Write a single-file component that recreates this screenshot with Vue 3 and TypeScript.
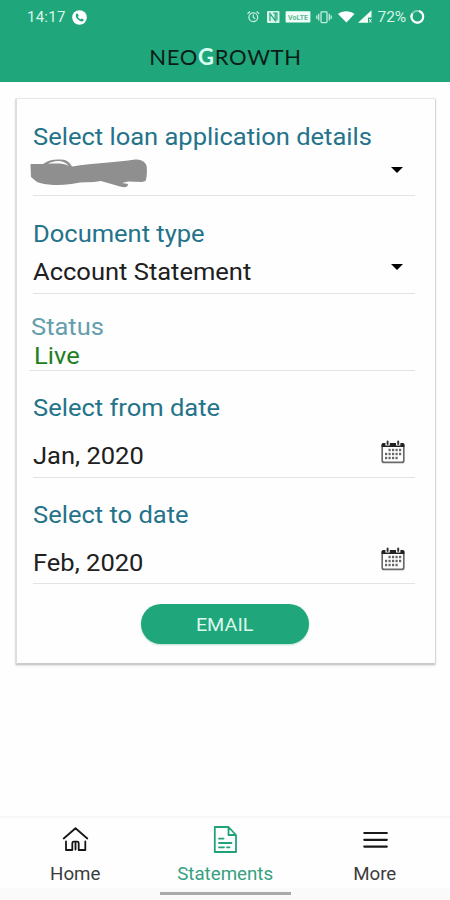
<script setup lang="ts">
interface Field {
  id: string
  label: string
  value: string
  control: 'select' | 'date' | 'none'
}

const fields: Field[] = [
  { id: 'loan', label: 'Select loan application details', value: '', control: 'select' },
  { id: 'doc', label: 'Document type', value: 'Account Statement', control: 'select' },
  { id: 'status', label: 'Status', value: 'Live', control: 'none' },
  { id: 'from', label: 'Select from date', value: 'Jan, 2020', control: 'date' },
  { id: 'to', label: 'Select to date', value: 'Feb, 2020', control: 'date' },
]
const columns = [0, 1, 2, 3, 4]
</script>

<template>
  <div class="screen">
    <header class="header">
      <div class="statusbar">
        <span class="time">14:17</span>
        <svg class="call" width="15" height="15" viewBox="0 0 15 15">
          <circle cx="7.5" cy="7.5" r="7.3" fill="#fff" />
          <path d="M4.2 3.7 5.7 3.4 6.7 5.7 5.9 6.7C6.5 8 7.3 8.8 8.6 9.3L9.6 8.4 11.8 9.5 11.3 11C9.8 12.2 7.2 10.9 5.7 9.3 4 7.6 3.1 5.1 4.2 3.7Z" fill="#1fa67b" />
        </svg>
        <div class="tray">
          <svg width="180" height="18" viewBox="0 0 180 18" fill="none">
            <g stroke="#c4eedd" stroke-width="1.3">
              <circle cx="8.3" cy="9.2" r="4.4" />
              <path d="M8.3 6.5V9.5L10.3 10.7M2.5 5.7 5 3.6M11.6 3.6 14.1 5.7" />
            </g>
            <rect x="22" y="3" width="12.5" height="12" rx="1" fill="#d5f5e9" />
            <path d="M25 13V5.5L30.2 12.6V5M28 5H31.9V12.5" stroke="#1fa67b" stroke-width="1.2" />
            <rect x="40.6" y="3.2" width="24.8" height="11.3" rx=".8" fill="#f2fff9" />
            <text x="43" y="11.5" class="volte" textLength="20">VoLTE</text>
            <g stroke="#c4eedd" stroke-width="1.3">
              <rect x="76" y="3.8" width="6" height="10.8" rx=".8" />
              <path d="M73.7 5.8V12.5M84.3 5.8V12.5M71.8 7.5V11M86.2 7.5V11" />
            </g>
            <path d="M93 6C97.5 2.4 105 2.4 109.5 6L101.4 14.4Z" fill="#fff" />
            <path d="M113 14.8 126.5 2.3V9.5H123V14.8Z" fill="#f2fff9" />
            <path d="M124.2 11 126.4 14.5M126.4 11 124.2 14.5" stroke="#e4faf1" stroke-width="1" />
            <text x="132.6" y="14.2" class="battery" textLength="28.5">72%</text>
            <circle cx="172.3" cy="8.7" r="5.9" stroke="#8bd4b9" stroke-width="1.8" />
            <path d="M174 3A5.9 5.9 0 1 1 167.3 5.6" stroke="#fff" stroke-width="2.2" />
          </svg>
        </div>
      </div>
      <h1 class="brand">NEO<span>G</span>ROWTH</h1>
    </header>

    <main class="main">
      <section class="card">
        <div v-for="f in fields" :key="f.id" class="field" :class="f.id">
          <div class="label"><span>{{ f.label }}</span></div>
          <div class="row">
            <svg v-if="f.id === 'loan'" class="scribble" width="118" height="30" viewBox="0 0 118 30">
              <path d="M.5 5H13C18 1 24 0 31 .5 38 1 40 4 42 7.5 64 4 88 3.5 105 .6 112-.2 117 4 116.8 9 117 14 117 18 115.5 22L112 23 98 22.5 92 24 98 25C98 29 94 28.5 90 27.5L71 22 64 23 50 23.5C37 26.5 22 27 10 24L7 23 1 18Z" fill="#8f8f8f" />
              <path d="M18 4.8C25 1 34 .8 39 7 34 4 26 4.2 18 4.8Z" fill="#fcfcfc" />
            </svg>
            <span v-else class="value">{{ f.value }}</span>
            <svg v-if="f.control === 'select'" class="caret" width="12" height="6" viewBox="0 0 12 6">
              <path d="M0 0H12L6 6Z" fill="#000" />
            </svg>
            <svg v-if="f.control === 'date'" class="calendar" width="24" height="24" viewBox="0 0 24 24">
              <rect x="1.2" y="4" width="21.6" height="18.4" rx="2" fill="#fff" stroke="#6a6a6a" stroke-width="1.7" />
              <path d="M.6 7V4.5Q.6 3 2.3 3H21.7Q23.4 3 23.4 4.5V7Z" fill="#222" />
              <path d="M4.4 0H8.8V5.5H4.4ZM15 0H19.4V5.5H15Z" fill="#fff" />
              <path d="M6.6 1.6V4M17.2 1.6V4" stroke="#333" stroke-width="2" stroke-linecap="round" />
              <g fill="#666">
                <template v-for="c in columns" :key="c">
                  <rect v-if="c > 0" :x="4 + c * 3.5" y="8.8" width="2.2" height="2.4" />
                  <rect :x="4 + c * 3.5" y="12.8" width="2.2" height="2.4" />
                  <rect v-if="c < 4" :x="4 + c * 3.5" y="16.8" width="2.2" height="2.4" />
                </template>
              </g>
            </svg>
          </div>
        </div>
        <button class="email" type="button"><span>EMAIL</span></button>
      </section>
    </main>

    <nav class="nav">
      <a class="tab home">
        <svg width="28" height="28" viewBox="0 0 28 28" fill="none" stroke="#161616" stroke-width="1.8" stroke-linecap="round" stroke-linejoin="round">
          <path d="M2.7 12.5 14.5 2.2 26.3 12.5M5 15.5V24H11.3V17.2Q11.3 15.7 12.8 15.7H16.2Q17.7 15.7 17.7 17.2V24H24.3V15.5M14.5 17V23.5" />
        </svg>
        <span>Home</span>
      </a>
      <a class="tab statements">
        <svg width="28" height="28" viewBox="0 0 28 28" fill="none" stroke="#23a17a" stroke-width="1.8" stroke-linecap="round" stroke-linejoin="round">
          <path d="M3.8 1H17.5L25 9V26H3.8ZM17.5 1V9H25M8 12.6H12.5M8 17H20.5M8 21.3H13M16 21.3H18.5" />
        </svg>
        <span>Statements</span>
      </a>
      <a class="tab more">
        <svg width="28" height="28" viewBox="0 0 28 28" stroke="#181818" stroke-width="2.2" stroke-linecap="round">
          <path d="M3.3 7H25.8M3.3 13.8H25.8M3.3 20.6H25.8" />
        </svg>
        <span>More</span>
      </a>
    </nav>
    <div class="gesture"><i></i></div>
  </div>
</template>

<style>
body { background: #fefefe; }
</style>

<style scoped>
* { box-sizing: border-box; }
.screen { width: 450px; height: 900px; display: flex; flex-direction: column; background: #fefefe; font-family: Roboto, "Liberation Sans", sans-serif; overflow: hidden; }
.header { height: 82px; flex: none; background: #1fa67b; }
.statusbar { height: 34px; display: flex; align-items: center; padding: 0 25px 0 27px; }
.time { color: #d8f6ea; font-size: 15px; letter-spacing: .25px; width: 45px; line-height: 20px; }
.call { display: block; }
.tray { margin-left: auto; height: 18px; width: 180px; }
.tray svg { display: block; }
.volte { font-size: 7px; font-weight: 700; fill: #58b895; }
.battery { font-size: 15.5px; fill: #d5f4e8; }
.brand { margin: 8px 0 0 1px; text-align: center; font: 400 22px/30px Lato, sans-serif; color: #0b1d17; letter-spacing: .7px; }
.brand span { color: #d9fff1; font-weight: 700; }
.main { flex: 1; padding: 16px 14px 0 15px; }
.card { height: 567px; border: 1px solid #e6e6e6; border-left: 2px solid #dedede; border-right-color: #d6d6d6; border-bottom: 2px solid #cbcbcb; border-radius: 2px; box-shadow: 0 1px 2px #e2e2e2; padding: 0 20px 0 16px; background: #fefefe; display: flex; flex-direction: column; }
.field { flex: none; border-bottom: 1px solid #e3e3e3; font-size: 24px; line-height: 28px; }
.label { color: #24738a; height: 28px; white-space: nowrap; }
.label span, .value { display: inline-block; transform: scaleX(1.063); transform-origin: left center; }
.row { display: flex; align-items: center; justify-content: space-between; height: 28px; color: #202020; }
.loan { height: 97px; padding-top: 24px; }
.loan .row { margin: 9px 0 0 -3px; }
.doc { height: 98px; padding-top: 24px; }
.doc .row { margin-top: 10px; }
.status { height: 77px; padding-top: 19px; margin-left: -4px; padding-left: 2px; }
.status .label { color: #659ead; }
.status .row { margin-top: 1px; padding-left: 3px; color: #217d22; }
.from, .to { padding-top: 23px; }
.from { height: 107px; }
.to { height: 106px; }
.from .row, .to .row { margin-top: 20px; }
.caret { margin-right: 12px; }
.loan .caret { margin-top: -8px; }
.doc .caret { margin-top: -11px; }
.calendar { margin: -8px 10px 0 0; }
.email { align-self: center; margin: 20px 0 0 2px; width: 168px; height: 40px; flex: none; border: 0; border-radius: 20px; background: #1fa67b; color: #daf8ed; font: 400 19px/42px Roboto, sans-serif; padding: 0; box-shadow: 0 1px 2px #b5dccd; }
.email span { display: inline-block; transform: scaleX(1.04); }
.nav { height: 72px; flex: none; display: grid; grid-template-columns: repeat(3, 1fr); border-top: 2px solid #f6f6f6; background: #fefefe; }
.tab { display: flex; flex-direction: column; align-items: center; padding-top: 8px; font-size: 18px; line-height: 22px; color: #3c3c3c; }
.tab span { transform: scaleX(1.04); }
.tab svg { display: block; margin-bottom: 9px; }
.statements { color: #35a17e; }
.gesture { height: 12px; flex: none; background: #fafafa; display: flex; justify-content: center; padding-top: 4px; }
.gesture i { display: block; width: 131px; height: 3px; background: #aaa; }
</style>
